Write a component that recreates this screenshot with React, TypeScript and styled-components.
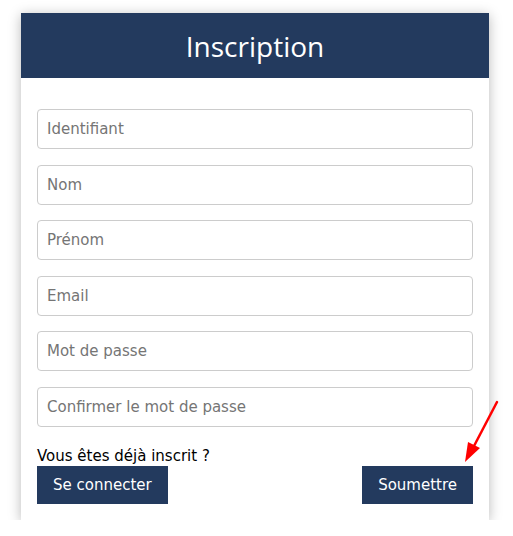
import styled, { createGlobalStyle } from "styled-components";

const GlobalStyle = createGlobalStyle`
    body {
        margin: 0;
        background: #ffffff;
        font-family: "DejaVu Sans", Verdana, sans-serif;
    }
`;

const Page = styled.div`
    position: relative;
    padding: 13px 0 0 21px;
`;

const Card = styled.form`
    width: 468px;
    background: #ffffff;
    box-shadow: 0 2px 12px rgba(0, 0, 0, 0.28);
`;

const Header = styled.div`
    display: flex;
    align-items: center;
    justify-content: center;
    height: 65px;
    background-color: #233a5e;
`;

const Title = styled.h1`
    margin: 0;
    font-family: "Open Sans", "Noto Sans", sans-serif;
    font-size: 28px;
    font-weight: 400;
    color: #ffffff;
`;

const Body = styled.div`
    display: flex;
    flex-direction: column;
    padding: 31px 16px 16px;
`;

const Fields = styled.div`
    display: flex;
    flex-direction: column;
    gap: 15.5px;
`;

const Input = styled.input`
    box-sizing: border-box;
    width: 100%;
    height: 40px;
    padding: 0 9px;
    border: 1px solid #cccccc;
    border-radius: 4px;
    font-family: "DejaVu Sans", Verdana, sans-serif;
    font-size: 15px;
    color: #333333;
    outline: none;

    &::placeholder {
        color: #757575;
    }
`;

const Question = styled.p`
    margin: 20px 0 1px;
    font-size: 15px;
    line-height: 18px;
    color: #000000;
`;

const Actions = styled.div`
    display: flex;
    justify-content: space-between;
`;

const Button = styled.button`
    height: 38px;
    padding: 0 16px;
    border: none;
    border-radius: 0;
    background-color: #233a5e;
    color: #ffffff;
    font-family: "DejaVu Sans", Verdana, sans-serif;
    font-size: 15px;
    cursor: pointer;
`;

const Arrow = styled.svg`
    position: absolute;
    left: 460px;
    top: 398px;
`;

const fields = [
    "Identifiant",
    "Nom",
    "Prénom",
    "Email",
    "Mot de passe",
    "Confirmer le mot de passe",
];

function App() {
    return (
        <>
            <GlobalStyle />
            <Page>
                <Card onSubmit={(e) => e.preventDefault()}>
                    <Header>
                        <Title>Inscription</Title>
                    </Header>
                    <Body>
                        <Fields>
                            {fields.map((f) => (
                                <Input
                                    key={f}
                                    type={f.includes("passe") ? "password" : "text"}
                                    placeholder={f}
                                />
                            ))}
                        </Fields>
                        <Question>Vous êtes déjà inscrit ?</Question>
                        <Actions>
                            <Button type="button">Se connecter</Button>
                            <Button type="submit">Soumettre</Button>
                        </Actions>
                    </Body>
                </Card>
                {/* red annotation arrow */}
                <Arrow width="44" height="70" viewBox="0 0 44 70">
                    <line x1="37" y1="4" x2="14" y2="48" stroke="#ff0000" strokeWidth="2.5" strokeLinecap="round" />
                    <polygon points="5,64 8,44 20,50" fill="#ff0000" />
                </Arrow>
            </Page>
        </>
    );
}

export default App;
